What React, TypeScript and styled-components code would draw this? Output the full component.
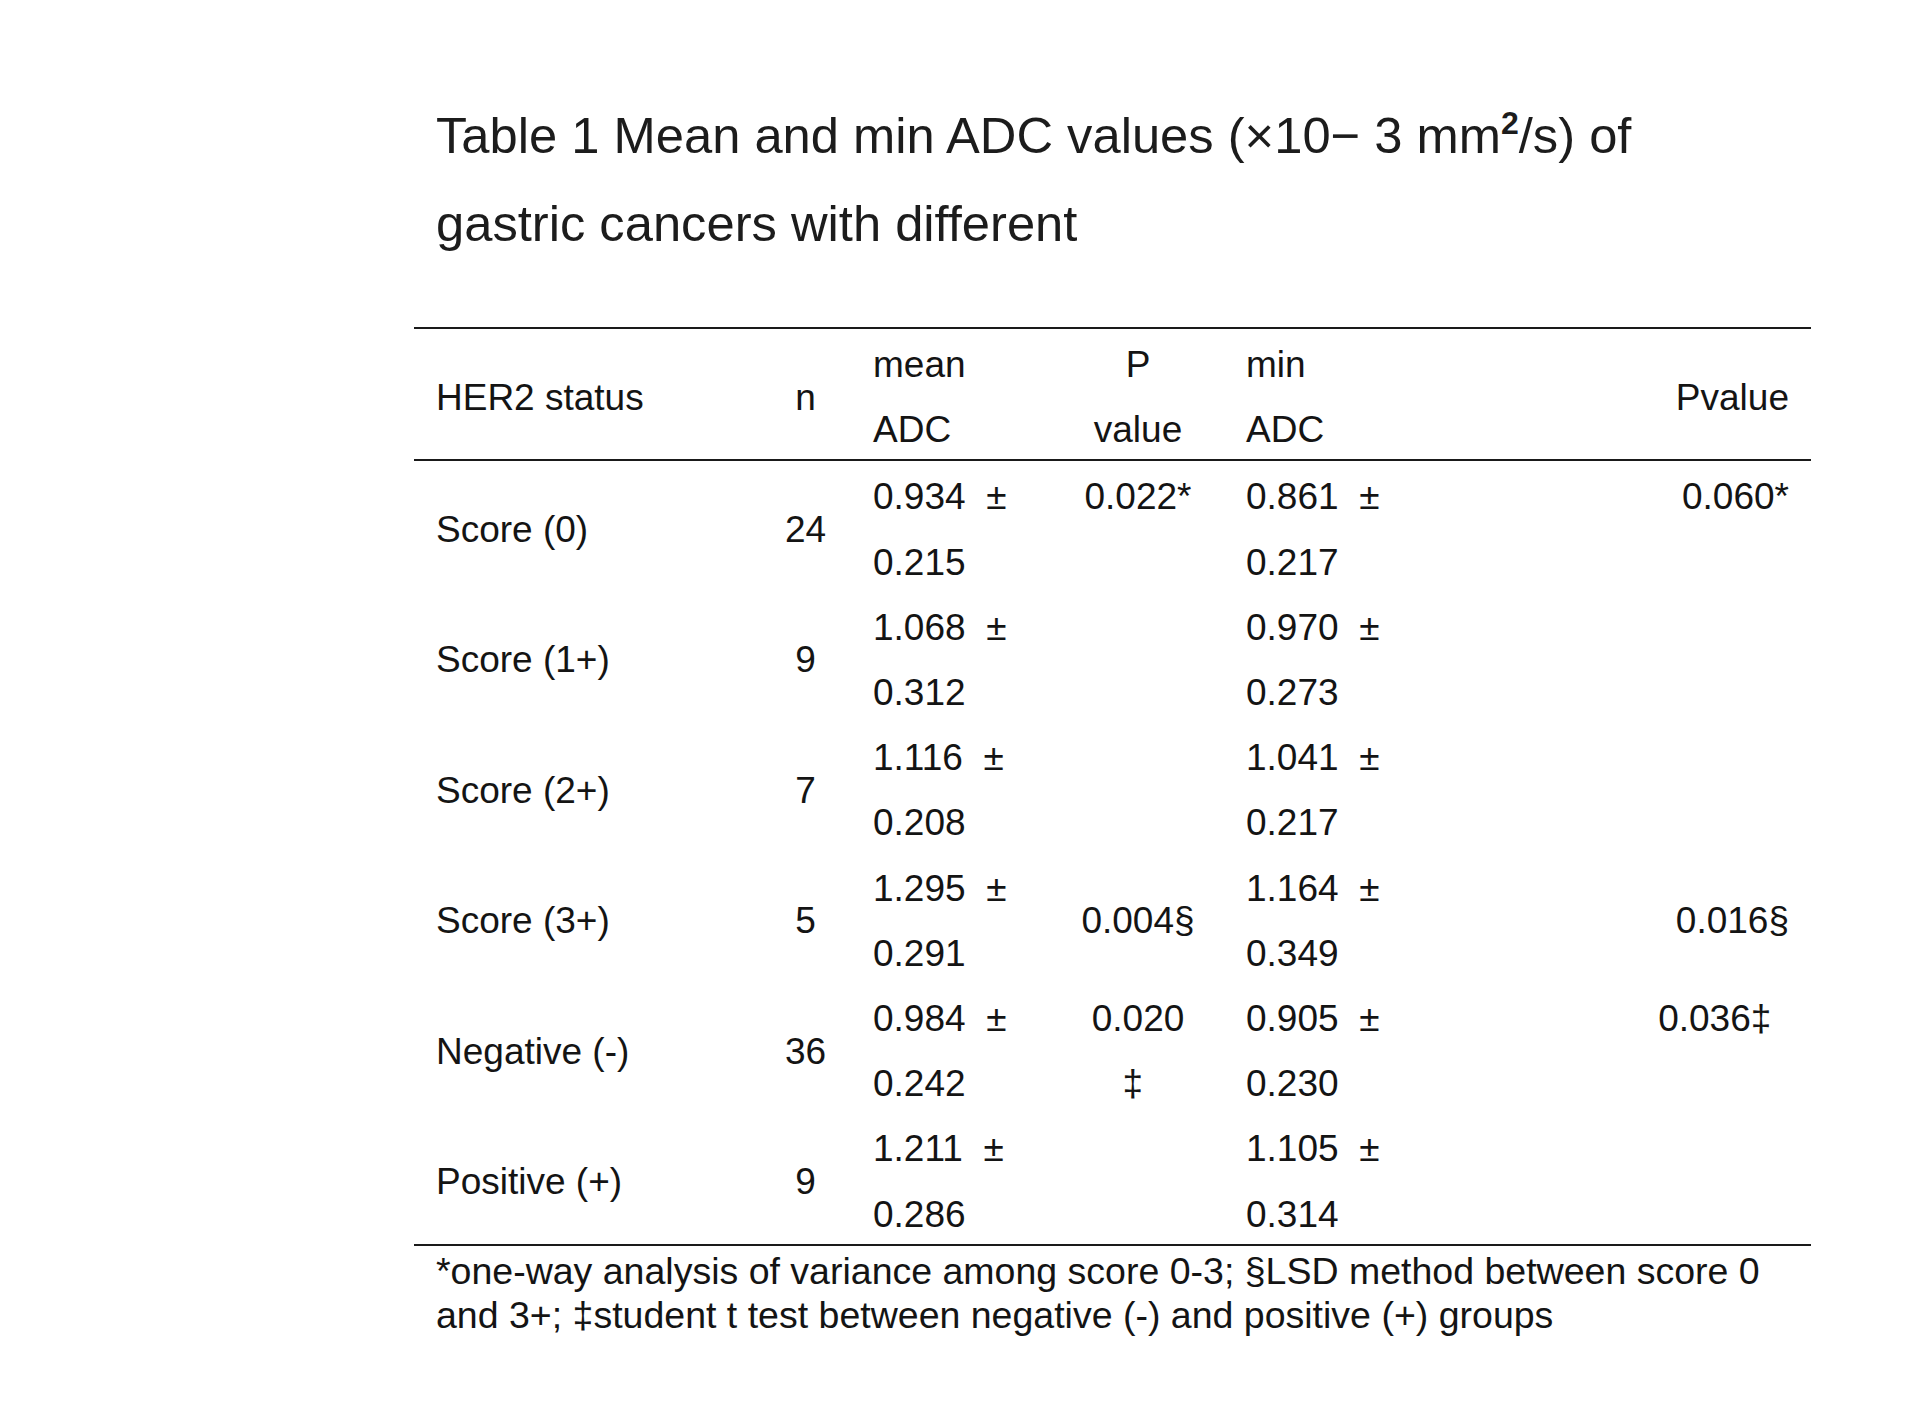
import React from "react";
import styled, { createGlobalStyle } from "styled-components";

const GlobalStyle = createGlobalStyle`
  html, body {
    margin: 0;
    padding: 0;
    background: #ffffff;
  }
  body {
    font-family: "Liberation Sans", Arial, Helvetica, sans-serif;
    color: #141414;
  }
`;

const COLUMNS = "346px 91px 201px 172px 196px 1fr";

const Page = styled.main`
  width: 1397px;
  padding: 92px 0 80px 414px;
`;

const Caption = styled.h1`
  margin: 0 0 59px 0;
  padding-left: 22px;
  width: 1280px;
  font-size: 50.7px;
  line-height: 88px;
  font-weight: normal;
  color: #1c1c1c;
`;

const Sup = styled.span`
  display: inline-block;
  font-size: 32px;
  font-weight: bold;
  line-height: 1;
  vertical-align: 19px;
`;

const Table = styled.div`
  width: 1397px;
  border-top: 2px solid #1a1a1a;
`;

const Row = styled.div<{ $header?: boolean; $last?: boolean }>`
  display: grid;
  grid-template-columns: ${COLUMNS};
  box-sizing: border-box;
  height: 130.4px;
  padding-top: 3px;
  border-bottom: ${(p) => (p.$header || p.$last ? "2px solid #1a1a1a" : "none")};
  ${(p) => (p.$header || p.$last ? "height: 132.4px;" : "")}
`;

type HAlign = "left" | "center" | "right";
type VAlign = "top" | "center";

const Cell = styled.div<{ $align?: HAlign; $valign?: VAlign }>`
  display: flex;
  flex-direction: column;
  justify-content: ${(p) => (p.$valign === "top" ? "flex-start" : "center")};
  align-items: ${(p) =>
    p.$align === "right" ? "flex-end" : p.$align === "center" ? "center" : "flex-start"};
  text-align: ${(p) => p.$align ?? "left"};
  padding: 0 22px;
  font-size: 37px;
  line-height: 65.2px;
  white-space: pre;
`;

const Line = styled.span`
  display: block;
`;

const Footnote = styled.p`
  margin: 0;
  padding: 3px 22px 0;
  font-size: 37.5px;
  line-height: 44px;
  width: 1360px;
`;

type PCell = { lines: string[]; valign: VAlign } | null;

type DataRow = {
  label: string;
  n: string;
  mean: [string, string];
  p: PCell;
  min: [string, string];
  pv: PCell;
};

const rows: DataRow[] = [
  {
    label: "Score (0)",
    n: "24",
    mean: ["0.934  ±", "0.215"],
    p: { lines: ["0.022*"], valign: "top" },
    min: ["0.861  ±", "0.217"],
    pv: { lines: ["0.060*"], valign: "top" },
  },
  {
    label: "Score (1+)",
    n: "9",
    mean: ["1.068  ±", "0.312"],
    p: null,
    min: ["0.970  ±", "0.273"],
    pv: null,
  },
  {
    label: "Score (2+)",
    n: "7",
    mean: ["1.116  ±", "0.208"],
    p: null,
    min: ["1.041  ±", "0.217"],
    pv: null,
  },
  {
    label: "Score (3+)",
    n: "5",
    mean: ["1.295  ±", "0.291"],
    p: { lines: ["0.004§"], valign: "center" },
    min: ["1.164  ±", "0.349"],
    pv: { lines: ["0.016§"], valign: "center" },
  },
  {
    label: "Negative (-)",
    n: "36",
    mean: ["0.984  ±", "0.242"],
    p: { lines: ["0.020", "‡ "], valign: "top" },
    min: ["0.905  ±", "0.230"],
    pv: { lines: ["0.036‡ \u2009"], valign: "top" },
  },
  {
    label: "Positive (+)",
    n: "9",
    mean: ["1.211  ±", "0.286"],
    p: null,
    min: ["1.105  ±", "0.314"],
    pv: null,
  },
];

function Lines({ lines }: { lines: string[] }) {
  return (
    <>
      {lines.map((l, i) => (
        <Line key={i}>{l}</Line>
      ))}
    </>
  );
}

export default function App() {
  return (
    <>
      <GlobalStyle />
      <Page>
        <Caption>
          Table 1 Mean and min ADC values (×10− 3 mm<Sup>2</Sup>/s) of gastric cancers with
          different
        </Caption>
        <Table>
          <Row $header>
            <Cell>HER2 status</Cell>
            <Cell $align="center">n</Cell>
            <Cell>
              <Lines lines={["mean", "ADC"]} />
            </Cell>
            <Cell $align="center">
              <Lines lines={["P", "value"]} />
            </Cell>
            <Cell>
              <Lines lines={["min", "ADC"]} />
            </Cell>
            <Cell $align="right">Pvalue</Cell>
          </Row>
          {rows.map((r, i) => (
            <Row key={r.label} $last={i === rows.length - 1}>
              <Cell>{r.label}</Cell>
              <Cell $align="center">{r.n}</Cell>
              <Cell>
                <Lines lines={r.mean} />
              </Cell>
              <Cell $align="center" $valign={r.p?.valign}>
                {r.p && <Lines lines={r.p.lines} />}
              </Cell>
              <Cell>
                <Lines lines={r.min} />
              </Cell>
              <Cell $align="right" $valign={r.pv?.valign}>
                {r.pv && <Lines lines={r.pv.lines} />}
              </Cell>
            </Row>
          ))}
        </Table>
        <Footnote>
          *one-way analysis of variance among score 0-3; §LSD method between score 0 and 3+;
          ‡student t test between negative (-) and positive (+) groups
        </Footnote>
      </Page>
    </>
  );
}
